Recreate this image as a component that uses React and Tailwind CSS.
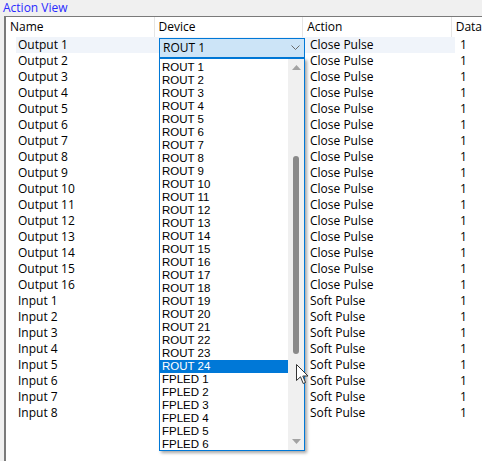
import React from "react";

const rows = [
  ...Array.from({ length: 16 }, (_, i) => ({ name: `Output ${i + 1}`, action: "Close Pulse" })),
  ...Array.from({ length: 8 }, (_, i) => ({ name: `Input ${i + 1}`, action: "Soft Pulse" })),
];

const items = [
  ...Array.from({ length: 24 }, (_, i) => `ROUT ${i + 1}`),
  ...Array.from({ length: 6 }, (_, i) => `FPLED ${i + 1}`),
];

export default function App() {
  return (
    <div
      className="relative w-[482px] h-[461px] overflow-hidden bg-[#f0f0f0] text-[12px] text-black"
      style={{ fontFamily: '"Segoe UI", "Open Sans", "Noto Sans", sans-serif' }}
    >
      <div className="h-[16px] pl-[3px] leading-[15px] text-[#2a2aff]">Action View</div>
      <div className="ml-[4px] h-[445px] border-l-2 border-t border-[#7a7a7a] bg-white">
        <div className="flex h-[20px] items-center leading-[20px]">
          <div className="w-[150px] h-full pl-[4px] border-r border-[#e5e5e5]">Name</div>
          <div className="w-[150px] h-full pl-[4px] border-r border-[#e5e5e5]">Device</div>
          <div className="w-[150px] h-full pl-[4px] border-r border-[#e5e5e5]">Action</div>
          <div className="flex-1 h-full pl-[4px]">Data</div>
        </div>
        <div className="flex flex-col">
          {rows.map((r, i) => (
            <div key={i} className="flex h-[16px] leading-[16px]">
              <div className={`flex w-[439px] ml-[10px] ${i === 0 ? "bg-[#f0f4fa]" : ""}`}>
                <div className="w-[140px] pl-[2px]">{r.name}</div>
                <div className="w-[150px]"></div>
                <div className="flex-1 pl-[4px]">{r.action}</div>
              </div>
              <div className="flex-1 pl-[5px]">1</div>
            </div>
          ))}
        </div>
      </div>

      {/* Combobox */}
      <div className="absolute left-[159px] top-[38px] w-[146px] h-[20px] border border-[#0078d7] bg-[#cce4f7] flex items-center justify-between pl-[3px] pr-[4px]">
        <span className="leading-[18px]">ROUT 1</span>
        <svg width="9" height="6" viewBox="0 0 9 6">
          <path d="M0.5 0.5 L4.5 4.5 L8.5 0.5" stroke="#6a6a6a" strokeWidth="1" fill="none" />
        </svg>
      </div>

      {/* Dropdown list */}
      <div className="absolute left-[159px] top-[58px] w-[146px] h-[393px] border border-[#0078d7] bg-white flex shadow-[2px_2px_3px_rgba(0,0,0,0.35)]">
        <div
          className="flex-1 flex flex-col pt-[2px] text-[11.5px]"
          style={{ fontFamily: '"Liberation Sans", Arial, sans-serif' }}
        >
          {items.map((t) => (
            <div
              key={t}
              className={`h-[13px] leading-[13px] pl-[2px] ${t === "ROUT 24" ? "bg-[#0078d7] text-white" : ""}`}
            >
              {t}
            </div>
          ))}
        </div>
        <div className="w-[16px] bg-[#f0f0f0] flex flex-col items-center">
          <div className="h-[17px] flex items-center justify-center">
            <svg width="9" height="5" viewBox="0 0 9 5">
              <path d="M0 5 L4.5 0 L9 5 Z" fill="#a3a3a3" />
            </svg>
          </div>
          <div className="h-[80px]"></div>
          <div className="w-[6px] h-[198px] rounded-full bg-[#8a8a8a]"></div>
          <div className="flex-1"></div>
          <div className="h-[17px] flex items-center justify-center">
            <svg width="9" height="5" viewBox="0 0 9 5">
              <path d="M0 0 L9 0 L4.5 5 Z" fill="#a3a3a3" />
            </svg>
          </div>
        </div>
      </div>

      {/* Mouse cursor */}
      <svg className="absolute left-[296px] top-[364px]" width="13" height="21" viewBox="0 0 13 21">
        <path
          d="M0.5 0.5 L0.5 16.5 L4.5 12.8 L7.2 19.5 L9.5 18.5 L6.8 12 L12 12 Z"
          fill="white"
          stroke="#333"
          strokeWidth="1"
          strokeLinejoin="round"
        />
      </svg>
    </div>
  );
}
